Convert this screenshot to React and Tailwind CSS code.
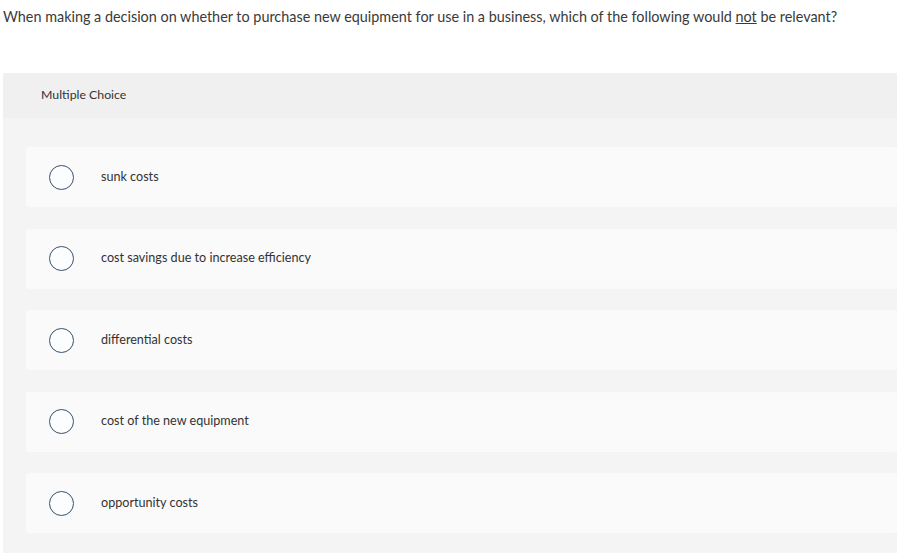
import React from 'react'

const options = [
  'sunk costs',
  'cost savings due to increase efficiency',
  'differential costs',
  'cost of the new equipment',
  'opportunity costs',
]

function Option({ label }) {
  return (
    <div className="h-[60px] bg-[#fafafa] rounded-[3px] flex items-center pl-[23px]">
      <span className="w-[25px] h-[25px] rounded-full border-[1.5px] border-[#3a5068] bg-[#fbfdff] shrink-0" />
      <span className="ml-[27px] text-[12.6px] text-[#333]">{label}</span>
    </div>
  )
}

export default function App() {
  return (
    <div className="w-[897px] h-[553px] bg-white overflow-hidden font-['Lato',sans-serif]">
      <p className="pl-[3px] pt-[8px] text-[14.4px] leading-[18px] text-[#3a3a3a]">
        When making a decision on whether to purchase new equipment for use in a business, which of the following would <span className="underline">not</span> be relevant?
      </p>

      <div className="ml-[3px] mt-[47px] bg-[#f4f4f4] pb-[20px]">
        <div className="h-[45px] bg-[#f0f0f0] flex items-center pl-[38px] text-[12.3px] text-[#333]">
          Multiple Choice
        </div>
        {/* Options */}
        <div className="pt-[29px] pl-[23px] flex flex-col gap-[21.5px]">
          {options.map(o => (
            <Option key={o} label={o} />
          ))}
        </div>
      </div>
    </div>
  )
}
